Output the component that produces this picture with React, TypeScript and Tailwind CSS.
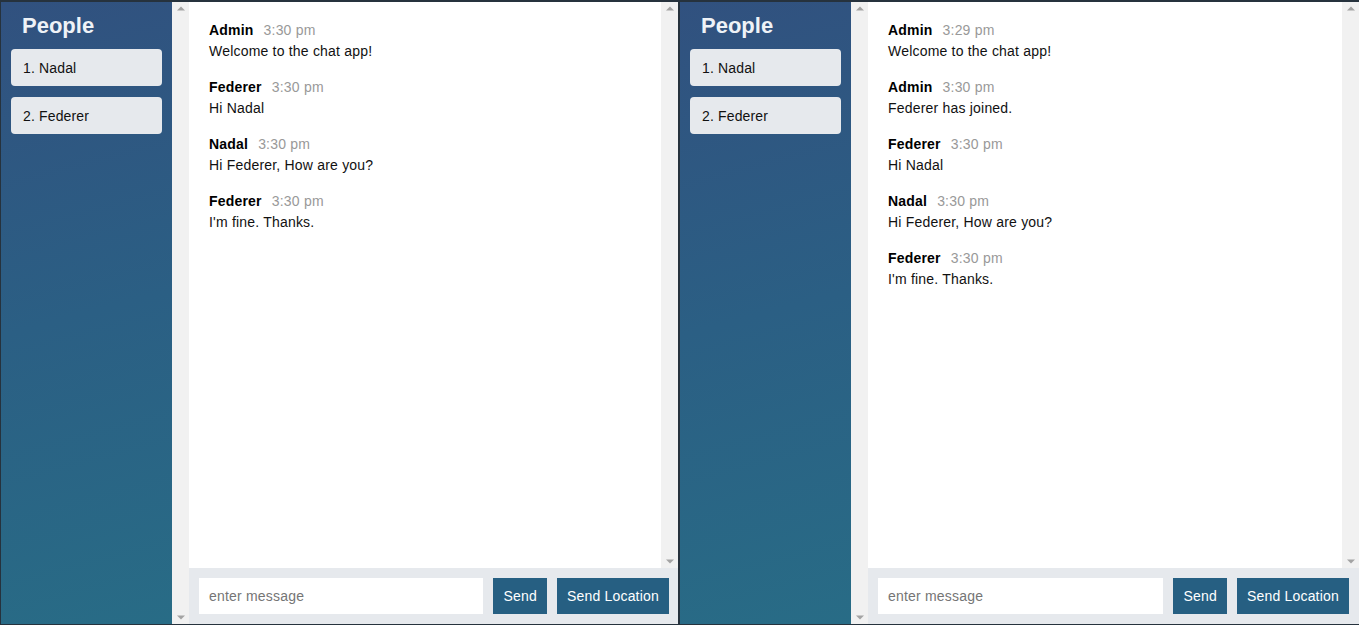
import React from "react";

type Msg = { name: string; time: string; text: string };

const w1: Msg[] = [
  { name: "Admin", time: "3:30 pm", text: "Welcome to the chat app!" },
  { name: "Federer", time: "3:30 pm", text: "Hi Nadal" },
  { name: "Nadal", time: "3:30 pm", text: "Hi Federer, How are you?" },
  { name: "Federer", time: "3:30 pm", text: "I'm fine. Thanks." },
];

const w2: Msg[] = [
  { name: "Admin", time: "3:29 pm", text: "Welcome to the chat app!" },
  { name: "Admin", time: "3:30 pm", text: "Federer has joined." },
  { name: "Federer", time: "3:30 pm", text: "Hi Nadal" },
  { name: "Nadal", time: "3:30 pm", text: "Hi Federer, How are you?" },
  { name: "Federer", time: "3:30 pm", text: "I'm fine. Thanks." },
];

function UpArrow() {
  return (
    <svg width="8" height="5" viewBox="0 0 8 5">
      <path d="M0 4.5 L4 0.5 L8 4.5 Z" fill="#a3a3a3" />
    </svg>
  );
}
function DownArrow() {
  return (
    <svg width="8" height="5" viewBox="0 0 8 5">
      <path d="M0 0.5 L4 4.5 L8 0.5 Z" fill="#a3a3a3" />
    </svg>
  );
}

function Scrollbar() {
  return (
    <div className="w-[17px] shrink-0 bg-[#f1f1f1] flex flex-col items-center justify-between pt-[4px] pb-[4px]">
      <UpArrow />
      <DownArrow />
    </div>
  );
}

function ChatWindow({ msgs, width, pr }: { msgs: Msg[]; width: string; pr: string }) {
  return (
    <div className={`flex h-full ${width}`}>
      <div className="flex h-full shrink-0">
        <div className="w-[171px] h-full bg-[linear-gradient(165deg,#31517f_0%,#2b5f84_50%,#286c86_100%)] px-[10px] pt-[11px]">
          <h3 className="text-[22px] leading-[26px] font-bold text-[#eef2f7] pl-[11px]">People</h3>
          <ol className="mt-[10px] flex flex-col gap-[11px]">
            <li className="h-[37px] rounded-[4px] bg-[#e6e9ed] pl-[12px] pt-[1px] flex items-center text-[14px] tracking-[0.15px] text-[#111]">1. Nadal</li>
            <li className="h-[37px] rounded-[4px] bg-[#e6e9ed] pl-[12px] pt-[1px] flex items-center text-[14px] tracking-[0.15px] text-[#111]">2. Federer</li>
          </ol>
        </div>
        <Scrollbar />
      </div>
      <div className="flex-1 flex flex-col h-full min-w-0">
        <div className="flex-1 flex min-h-0 bg-white">
          <ol className="flex-1 pt-[18px] pl-[20px] flex flex-col gap-[16px]">
            {msgs.map((m, i) => (
              <li key={i} className="text-[14px] leading-[20px] tracking-[0.2px]">
                <div>
                  <span className="font-bold text-black">{m.name}</span>
                  <span className="text-[#999] ml-[10px]">{m.time}</span>
                </div>
                <p className="text-[#111] mt-[1px]">{m.text}</p>
              </li>
            ))}
          </ol>
          <Scrollbar />
        </div>
        <div className={`h-[56px] shrink-0 bg-[#e6e9ed] py-[10px] pl-[10px] ${pr} flex gap-[10px]`}>
          <div className="flex-1 bg-white flex items-center pl-[10px] text-[14px] tracking-[0.2px] text-[#757575]">enter message</div>
          <button className="bg-[#265f82] text-white text-[14px] tracking-[0.2px] px-[10px]">Send</button>
          <button className="bg-[#265f82] text-white text-[14px] tracking-[0.2px] px-[10px]">Send Location</button>
        </div>
      </div>
    </div>
  );
}

export default function App() {
  return (
    <div
      className="w-[1359px] h-[625px] bg-[#26323d] flex pt-[2px] pb-[1px] pl-[1px] gap-[2px] overflow-hidden"
      style={{ fontFamily: '"Liberation Sans", Arial, sans-serif' }}
    >
      <ChatWindow msgs={w1} width="w-[677px]" pr="pr-[9px]" />
      <ChatWindow msgs={w2} width="w-[679px]" pr="pr-[10px]" />
    </div>
  );
}
